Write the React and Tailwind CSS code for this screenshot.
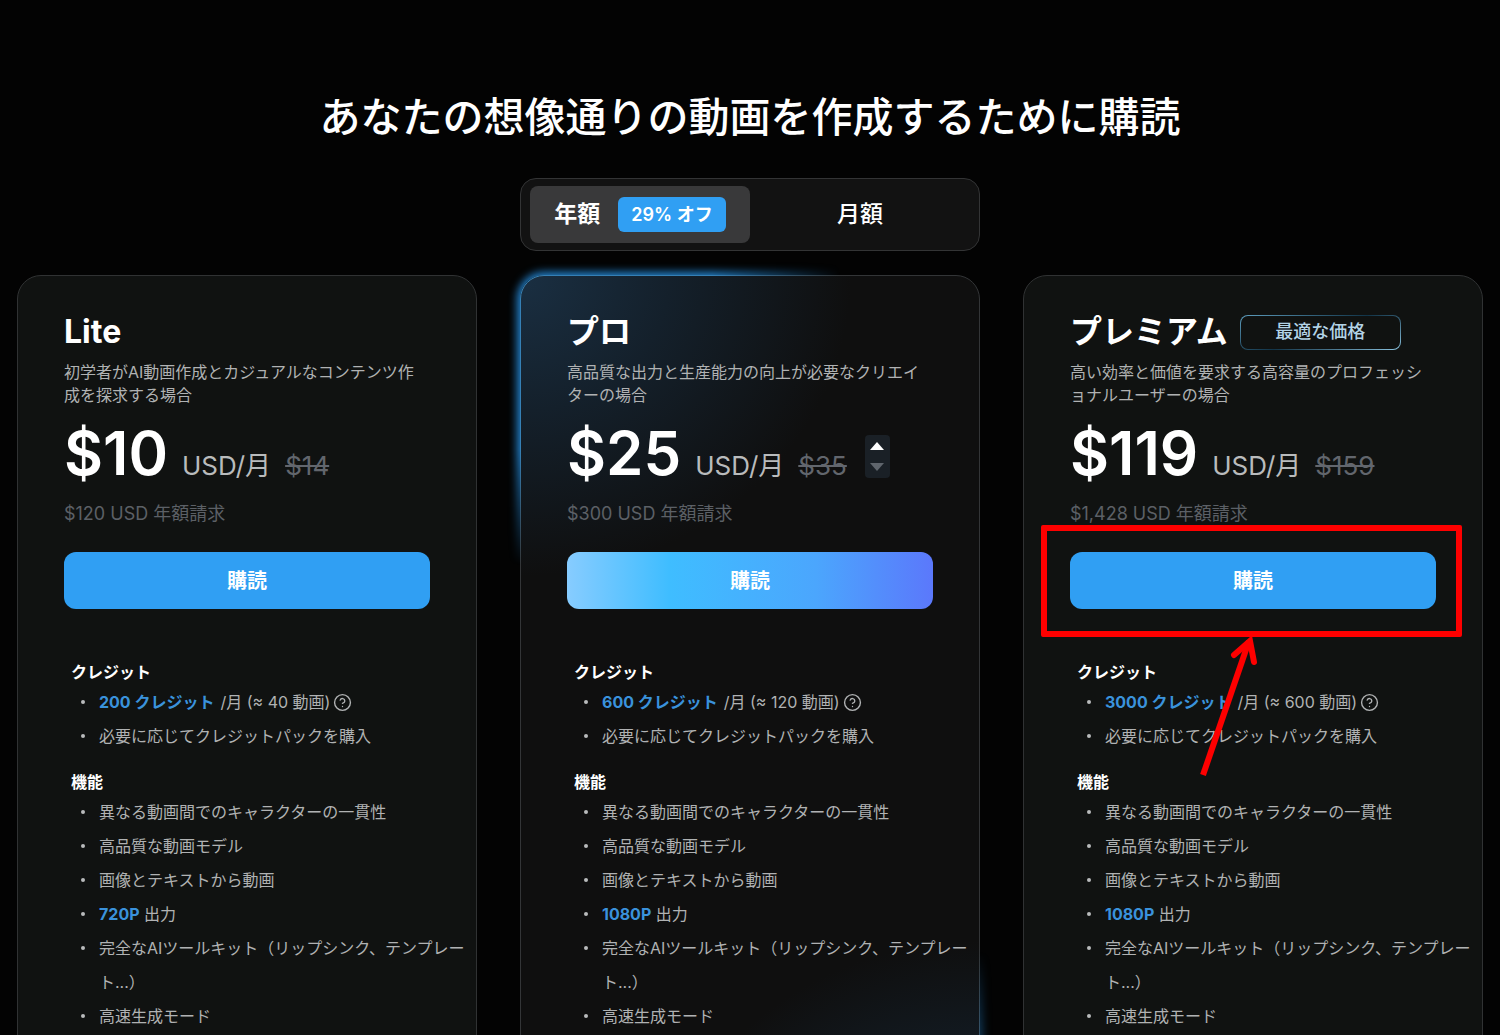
import React, { useState } from 'react';
import { CircleHelp } from 'lucide-react';

const plans = [
    {
        id: 'lite',
        name: 'Lite',
        desc: '初学者がAI動画作成とカジュアルなコンテンツ作成を探求する場合',
        price: '$10',
        oldPrice: '$14',
        billed: '$120 USD 年額請求',
        credits: '200 クレジット',
        videos: '/月 (≈ 40 動画)',
        output: '720P',
    },
    {
        id: 'pro',
        name: 'プロ',
        desc: '高品質な出力と生産能力の向上が必要なクリエイターの場合',
        price: '$25',
        oldPrice: '$35',
        billed: '$300 USD 年額請求',
        credits: '600 クレジット',
        videos: '/月 (≈ 120 動画)',
        output: '1080P',
        featured: true,
    },
    {
        id: 'premium',
        name: 'プレミアム',
        desc: '高い効率と価値を要求する高容量のプロフェッショナルユーザーの場合',
        price: '$119',
        oldPrice: '$159',
        billed: '$1,428 USD 年額請求',
        credits: '3000 クレジット',
        videos: '/月 (≈ 600 動画)',
        output: '1080P',
        badge: '最適な価格',
        highlighted: true,
    },
];

// Blue edge light on the top-left and bottom-right corners
function Glow() {
    return (
        <div className="absolute -inset-5 p-5 pointer-events-none [mask-image:radial-gradient(320px_290px_at_20px_20px,black_60%,transparent),radial-gradient(320px_290px_at_calc(100%-20px)_calc(100%-20px),black_30%,transparent)]">
            <div className="h-full rounded-3xl border border-[#3580b5] shadow-[0_0_9px_3px_#2382cc]" />
        </div>
    );
}

function Stepper() {
    return (
        <div className="ml-[18px] mb-[7px] flex flex-col justify-between w-[25px] h-[43px] rounded bg-[#1a2026] self-end">
            <button type="button" aria-label="増やす" className="flex-1 flex items-center justify-center">
                <svg width="14" height="8" viewBox="0 0 14 8"><path d="M7 0 14 8H0Z" fill="#fff" /></svg>
            </button>
            <button type="button" aria-label="減らす" className="flex-1 flex items-center justify-center">
                <svg width="14" height="8" viewBox="0 0 14 8"><path d="M0 0H14L7 8Z" fill="#5f656c" /></svg>
            </button>
        </div>
    );
}

function Callout() {
    return (
        <div className="absolute -top-[27px] -bottom-7 -left-[29px] -right-[26px] border-6 border-[#fe0000] rounded-xs pointer-events-none">
            <svg className="absolute top-full left-1/2 -ml-[61px]" width="80" height="148" viewBox="0 0 80 148" fill="none" stroke="#fe0000" strokeWidth="6">
                <path d="M12 144 L58 10" />
                <path d="M43 24 L59 10 L63 31" strokeLinecap="round" />
            </svg>
        </div>
    );
}

function Item({ children }) {
    return (
        <li className="flex">
            <span className="w-[28px] pl-[10px] shrink-0 flex h-[34px] items-center">
                <span className="w-1 h-1 rounded-full bg-[#b9bbbc]" />
            </span>
            <div className="flex-1 break-all">{children}</div>
        </li>
    );
}

function PlanCard({ plan }) {
    return (
        <article className="relative flex-1 min-w-0">
            <div className={`relative h-full rounded-3xl border pt-[33px] pb-52
                ${plan.featured
                    ? 'border-[#333537] bg-[#0f0f0f] bg-[radial-gradient(330px_300px_at_0_0,#1a2f42,#14202b_45%,transparent),radial-gradient(330px_300px_at_100%_100%,#1a2f42,#14202b_45%,transparent)]'
                    : 'border-[#303233] bg-[#101211]'}`}>

                {/* ── Price block ── */}
                <div className="px-[46px]">
                    <div className="flex items-center gap-3 h-[46px]">
                        <h2 className="text-[32px] font-bold text-white whitespace-nowrap">{plan.name}</h2>
                        {plan.badge && (
                            <span className="w-[161px] h-[35px] rounded-lg p-px bg-linear-[160deg] from-[#5f9fc0] via-[#123448] via-50% to-[#8cc5e2]">
                                <span className="flex h-full items-center justify-center rounded-[7px] bg-[#101211] text-lg font-medium text-[#b3d3e6]">
                                    {plan.badge}
                                </span>
                            </span>
                        )}
                    </div>
                    <p className="mt-[6px] pr-2 leading-[23px] text-[#b0b2b3] break-all">{plan.desc}</p>
                    <div className="mt-[14px] flex items-baseline h-[64px] whitespace-nowrap">
                        <span className="text-[60px] leading-[64px] font-semibold text-white">{plan.price}</span>
                        <span className="ml-[14px] text-[26px] leading-[40px] text-[#b9bbbc]">USD/月</span>
                        <del className="ml-[14px] text-[26px] leading-[40px] text-[#62666d]">{plan.oldPrice}</del>
                        {plan.featured && <Stepper />}
                    </div>
                    <p className="mt-[15px] text-lg leading-[28px] text-[#5c6066]">{plan.billed}</p>
                    <div className="relative z-10 mt-6">
                        <button
                            type="button"
                            className={`w-full h-[57px] rounded-xl text-xl font-bold text-white
                                ${plan.featured
                                    ? 'bg-[linear-gradient(90deg,#87ccff,#3fbdff_28%,#4ba6fd_68%,#5b78fb)]'
                                    : 'bg-[#309ff3]'}`}
                        >
                            購読
                        </button>
                        {plan.highlighted && <Callout />}
                    </div>
                </div>

                {/* ── Feature lists ── */}
                <div className="mt-[50px] pl-[53px] pr-[10px] leading-[34px] text-[#b0b2b3]">
                    <h3 className="leading-[26px] font-bold text-white">クレジット</h3>
                    <ul>
                        <Item>
                            <span className="flex items-center whitespace-nowrap">
                                <b className="text-[#3a92dc] font-bold mr-[6px]">{plan.credits}</b>
                                {plan.videos}
                                <CircleHelp className="ml-[3px]" size={19} strokeWidth={1.75} />
                            </span>
                        </Item>
                        <Item>必要に応じてクレジットパックを購入</Item>
                    </ul>
                    <h3 className="mt-4 leading-[26px] font-bold text-white">機能</h3>
                    <ul>
                        <Item>異なる動画間でのキャラクターの一貫性</Item>
                        <Item>高品質な動画モデル</Item>
                        <Item>画像とテキストから動画</Item>
                        <Item><b className="text-[#3a92dc] font-bold">{plan.output}</b> 出力</Item>
                        <Item>完全なAIツールキット（リップシンク、テンプレート...）</Item>
                        <Item>高速生成モード</Item>
                    </ul>
                </div>
            </div>
            {plan.featured && <Glow />}
        </article>
    );
}

export default function App() {
    const [billing, setBilling] = useState('year');

    return (
        <main lang="ja" className="h-screen overflow-hidden bg-[#030303] text-base font-['Inter','Noto_Sans_CJK_JP',sans-serif]">
            <h1 className="pt-[87px] text-center text-[41px] leading-[60px] font-medium text-white">
                あなたの想像通りの動画を作成するために購読
            </h1>

            {/* ── Billing switch ── */}
            <div className="mx-auto mt-[31px] w-[460px] h-[73px] px-[9px] py-[7px] flex rounded-2xl border border-[#333435] bg-[#121212] text-[23px] text-white">
                <button
                    type="button"
                    onClick={() => setBilling('year')}
                    className={`flex-1 flex items-center justify-center gap-[18px] rounded-lg font-bold ${billing === 'year' ? 'bg-[#39393a]' : ''}`}
                >
                    年額
                    <span className="px-[13px] h-[35px] flex items-center rounded-md bg-[#309ff3] text-lg font-semibold">29% オフ</span>
                </button>
                <button
                    type="button"
                    onClick={() => setBilling('month')}
                    className={`flex-1 rounded-lg font-medium ${billing === 'month' ? 'bg-[#39393a]' : ''}`}
                >
                    月額
                </button>
            </div>

            <section className="mt-6 px-[17px] flex gap-[43px]">
                {plans.map(plan => <PlanCard key={plan.id} plan={plan} />)}
            </section>
        </main>
    );
}
